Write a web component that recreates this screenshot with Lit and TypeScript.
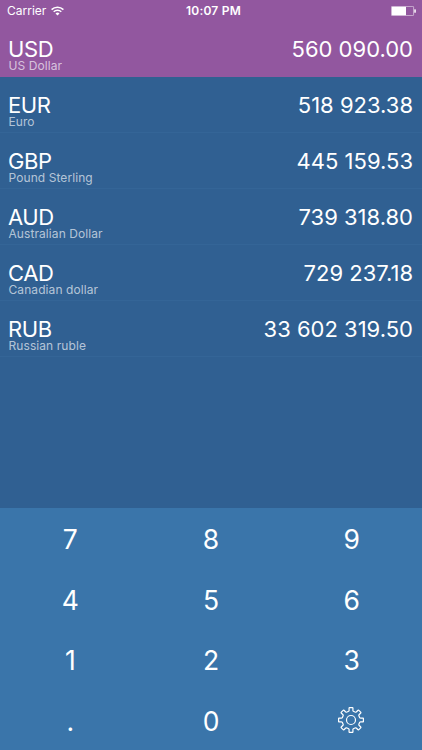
import { LitElement, html, css, svg } from "lit";
import { customElement, property } from "lit/decorators.js";
import { classMap } from "lit/directives/class-map.js";

interface Currency {
  code: string;
  name: string;
  amount: string;
}

const CURRENCIES: Currency[] = [
  { code: "USD", name: "US Dollar", amount: "560 090.00" },
  { code: "EUR", name: "Euro", amount: "518 923.38" },
  { code: "GBP", name: "Pound Sterling", amount: "445 159.53" },
  { code: "AUD", name: "Australian Dollar", amount: "739 318.80" },
  { code: "CAD", name: "Canadian dollar", amount: "729 237.18" },
  { code: "RUB", name: "Russian ruble", amount: "33 602 319.50" },
];

const KEYS = ["7", "8", "9", "4", "5", "6", "1", "2", "3", ".", "0"];

/** Closed outline of an eight-toothed cog centred on the origin. */
function cogPath(): string {
  const corners: Array<[number, number]> = [
    [-15, 9],
    [-11.5, 9.6],
    [-9.3, 12],
    [-7.5, 12.5],
    [7.5, 12.5],
    [9.3, 12],
    [11.5, 9.6],
    [15, 9],
  ];
  const points: string[] = [];
  for (let tooth = 0; tooth < 8; tooth++) {
    for (const [offset, radius] of corners) {
      const angle = ((tooth * 45 + offset) * Math.PI) / 180;
      points.push(`${(radius * Math.sin(angle)).toFixed(2)} ${(-radius * Math.cos(angle)).toFixed(2)}`);
    }
  }
  return `M${points.join("L")}Z`;
}

@customElement("status-bar")
export class StatusBar extends LitElement {
  static styles = css`
    :host {
      display: grid;
      grid-template-columns: 1fr auto 1fr;
      align-items: center;
      height: 22px;
      padding: 0 6px 0 7px;
      font-size: 12px;
      line-height: 22px;
      color: #fff;
    }
    .left {
      display: flex;
      align-items: center;
      gap: 5px;
    }
    .time {
      font-weight: 600;
      letter-spacing: 0.2px;
      padding-left: 4px;
    }
    .battery {
      justify-self: end;
    }
    svg {
      display: block;
    }
  `;

  render() {
    return html`
      <div class="left">
        <span>Carrier</span>
        <svg width="13" height="10" viewBox="0 0 13 10">
          <g fill="none" stroke="#fff" stroke-width="1.5">
            <path d="M0.6 3.6A8.3 8.3 0 0 1 12.4 3.6" />
            <path d="M2.7 5.8A5.4 5.4 0 0 1 10.3 5.8" />
          </g>
          <path fill="#fff" d="M6.5 9.5L4.5 7.5A3 3 0 0 1 8.5 7.5Z" />
        </svg>
      </div>
      <span class="time">10:07 PM</span>
      <svg class="battery" width="25" height="10" viewBox="0 0 25 10">
        <rect x="0.4" y="0.4" width="22.2" height="9.2" rx="0.8" fill="none" stroke="#fff" stroke-opacity="0.75" stroke-width="0.7" />
        <rect x="0.8" y="0.8" width="14.2" height="8.4" fill="#fff" />
        <rect x="23.3" y="3.2" width="1.5" height="3.6" rx="0.6" fill="#fff" />
      </svg>
    `;
  }
}

@customElement("currency-row")
export class CurrencyRow extends LitElement {
  @property({ attribute: false }) currency!: Currency;

  static styles = css`
    :host {
      display: flex;
      justify-content: space-between;
      box-sizing: border-box;
      height: 56px;
      padding: 18px 9px 0 8px;
      border-bottom: 1px solid #346597;
      color: #fff;
    }
    .code,
    .amount {
      font-size: 22px;
      line-height: 20px;
    }
    .code {
      letter-spacing: -0.4px;
    }
    .name {
      padding-left: 0.5px;
      font-size: 12px;
      line-height: 14px;
      letter-spacing: 0.08px;
      color: rgba(255, 255, 255, 0.65);
    }
    .amount {
      white-space: nowrap;
    }
  `;

  render() {
    const { code, name, amount } = this.currency;
    return html`
      <div>
        <div class="code">${code}</div>
        <div class="name">${name}</div>
      </div>
      <div class="amount">${amount}</div>
    `;
  }
}

@customElement("key-pad")
export class KeyPad extends LitElement {
  static styles = css`
    :host {
      display: grid;
      grid-template-columns: repeat(3, 1fr);
      grid-template-rows: repeat(4, 1fr);
      height: 242px;
      background: #3a75aa;
      color: #fff;
    }
    .key {
      display: flex;
      align-items: center;
      justify-content: center;
      font-size: 26.5px;
      line-height: 30px;
      padding-top: 2px;
    }
    .settings {
      padding: 0 1px 0 0;
    }
    svg {
      display: block;
    }
  `;

  render() {
    return html`
      ${KEYS.map((key) => html`<div class="key">${key}</div>`)}
      <div class="key settings">
        <svg width="28" height="28" viewBox="-14 -14 28 28" fill="none" stroke="#fff" stroke-width="1.2" stroke-linejoin="round">
          ${svg`<path d=${cogPath()} />`}
          <circle r="4.5" />
        </svg>
      </div>
    `;
  }
}

@customElement("app-root")
export class AppRoot extends LitElement {
  static styles = css`
    :host {
      display: flex;
      flex-direction: column;
      height: 750px;
      overflow: hidden;
      background: #306092;
      font-family: Inter, "Liberation Sans", sans-serif;
    }
    .header {
      flex: none;
      height: 77px;
      background: #92579f;
    }
    .base {
      height: 55px;
      border-bottom: none;
      padding-top: 17px;
    }
    .list {
      flex: 1;
    }
  `;

  render() {
    return html`
      <div class="header">
        <status-bar></status-bar>
        ${this.row(CURRENCIES[0], true)}
      </div>
      <div class="list">${CURRENCIES.slice(1).map((c) => this.row(c, false))}</div>
      <key-pad></key-pad>
    `;
  }

  private row(currency: Currency, base: boolean) {
    return html`<currency-row class=${classMap({ base })} .currency=${currency}></currency-row>`;
  }
}
